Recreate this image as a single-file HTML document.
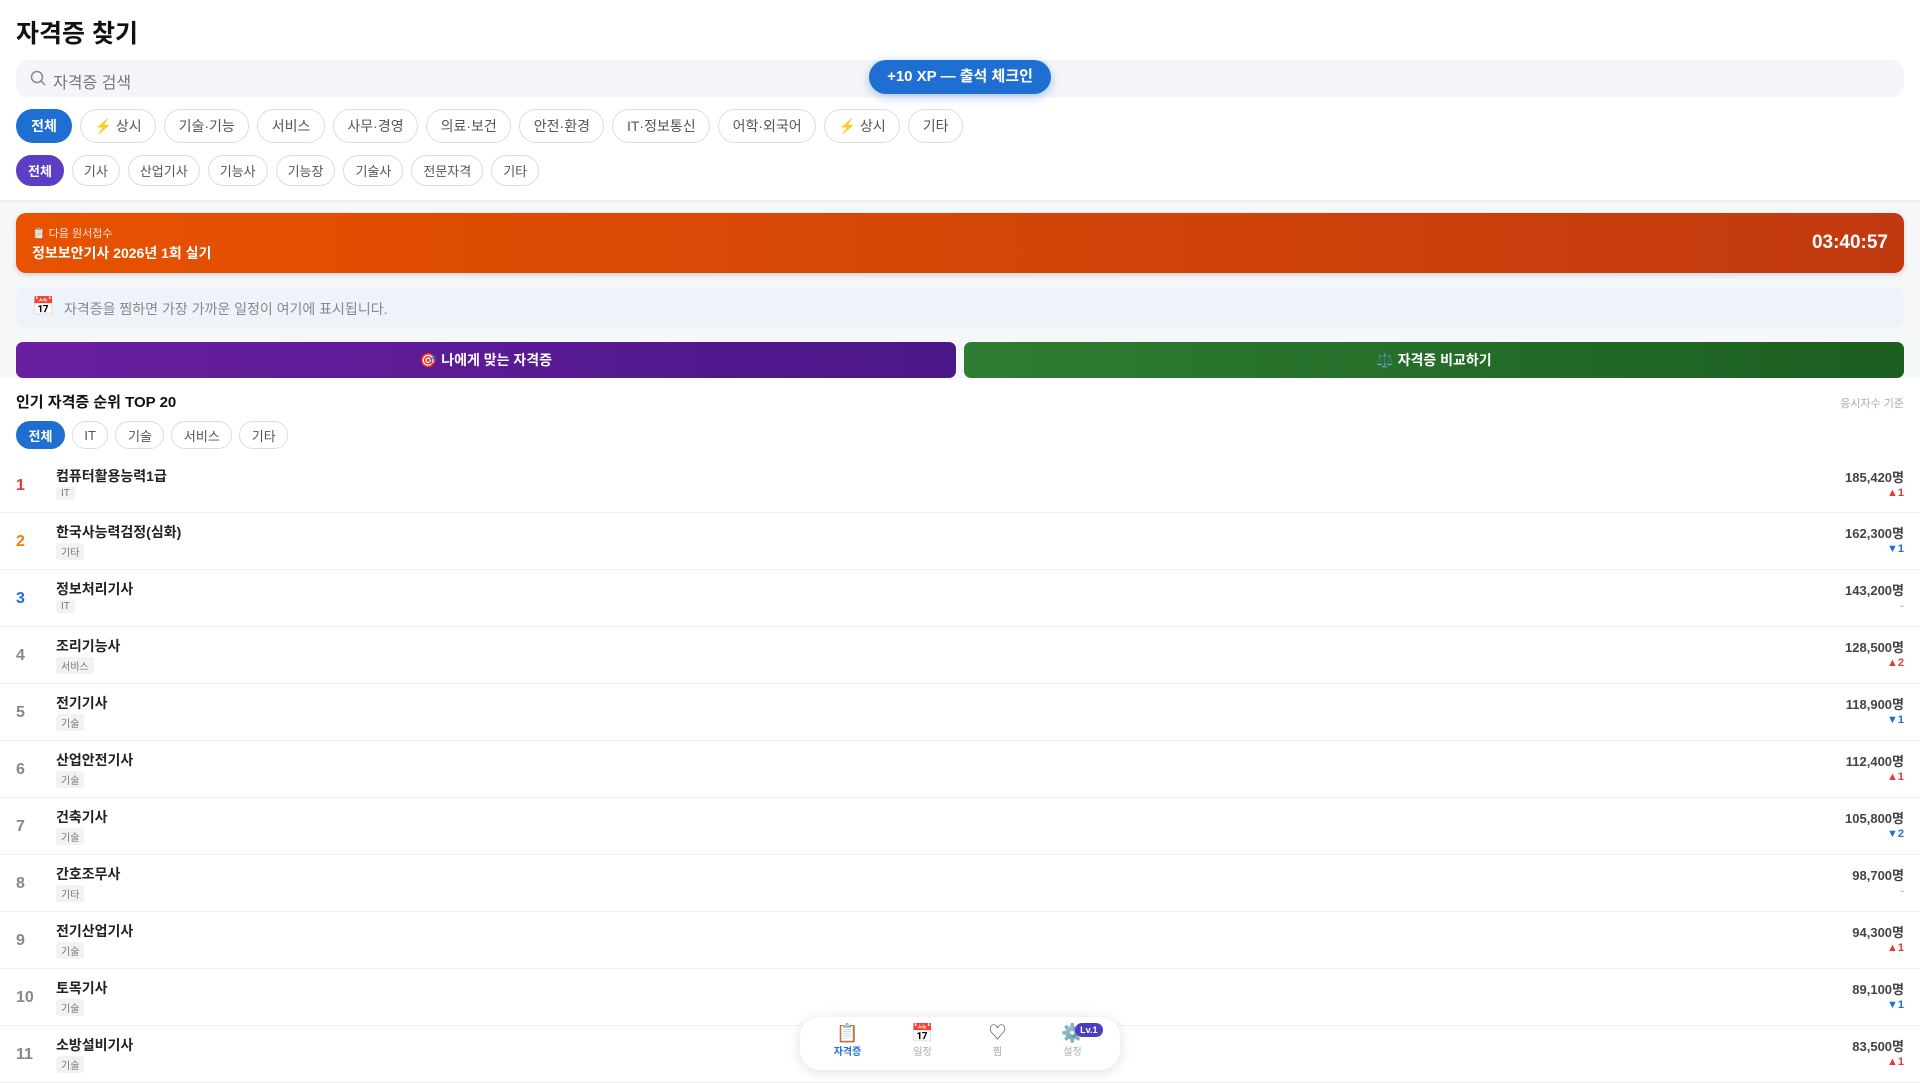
<!DOCTYPE html>
<html><head><meta charset="utf-8"><style>
*{box-sizing:border-box;margin:0;padding:0}
body{width:1920px;height:1080px;overflow:hidden;background:#fff;font-family:"Liberation Sans","Noto Sans CJK KR",sans-serif;color:#222;position:relative}
.top{position:absolute;left:0;top:0;width:1920px;height:202px;background:#fff;border-bottom:2px solid #eef0f3}
h1{position:absolute;left:16px;top:14px;font-size:25px;font-weight:700;color:#111}
.search{position:absolute;left:16px;top:60px;width:1888px;height:37px;background:#f4f5f8;border-radius:12px;font-size:16px;color:#777;padding:9px 0 0 37px}
.search svg{position:absolute;left:14px;top:10px}
.xp{position:absolute;left:869px;top:60px;width:182px;height:34px;background:#1f6fd3;border-radius:17px;color:#fff;font-weight:700;font-size:15px;text-align:center;line-height:34px;box-shadow:0 3px 10px rgba(31,111,211,.35)}
.row{position:absolute;left:16px;display:flex;gap:8px}
.chip{border:1px solid #ddd;border-radius:20px;background:#fff;color:#555;font-size:14px;display:flex;align-items:center;justify-content:center;white-space:nowrap}
.r1 .chip{height:34px;padding:0 13.5px}
.r2 .chip{height:31px;padding:0 11px;font-size:13px}
.on{background:#1f6fd3!important;color:#fff!important;border-color:#1f6fd3!important;font-weight:700}
.onp{background:#5b3ec4!important;color:#fff!important;border-color:#5b3ec4!important;font-weight:700}
.gray{position:absolute;left:0;top:202px;width:1920px;height:176px;background:#f6f7f9}
.banner{position:absolute;left:16px;top:213px;width:1888px;height:60px;border-radius:10px;background:linear-gradient(90deg,#e85200,#c1390f);color:#fff;box-shadow:0 2px 6px rgba(0,0,0,.15)}
.banner .s{position:absolute;left:16px;top:12px;font-size:11px;opacity:.85}
.banner .t{position:absolute;left:16px;top:30px;font-size:14px;font-weight:700}
.banner .c{position:absolute;right:16px;top:19px;font-size:19px;font-weight:700}
.note{position:absolute;left:16px;top:287px;width:1888px;height:41px;background:#eef2f9;border-radius:10px;font-size:14px;color:#888;padding:12px 0 0 48px}
.note .i{position:absolute;left:16px;top:9px;font-size:18px}
.btn{position:absolute;top:342px;height:36px;border-radius:7px;color:#fff;font-weight:700;font-size:14px;text-align:center;line-height:36px}
.sec{position:absolute;left:16px;top:391px;font-size:15px;font-weight:700;color:#111}
.crit{position:absolute;right:16px;top:395px;font-size:11px;color:#aaa}
.tabs{position:absolute;left:16px;top:421px;display:flex;gap:7px}
.tabs .chip{height:28px;padding:0 11.5px;font-size:13px}
.item{position:absolute;left:0;width:1920px;border-bottom:1px solid #f0f1f3}
.rk{position:absolute;left:16px;font-size:16px;font-weight:700}
.nm{position:absolute;left:56px;font-size:14px;font-weight:700;color:#222}
.tg{position:absolute;left:56px;font-size:10px;color:#777;background:#f1f2f4;border-radius:3px;padding:1px 5px}
.cnt{position:absolute;right:16px;font-size:13px;font-weight:700;color:#444}
.ch{position:absolute;right:16px;font-size:11px;font-weight:700}
.nav{position:absolute;left:800px;top:1017px;width:320px;height:53px;background:#fff;border-radius:20px;box-shadow:0 2px 14px rgba(0,0,0,.13);display:flex;justify-content:space-around;padding:6px 10px 0}
.nav div{width:60px;text-align:center;font-size:10px;color:#aaa;position:relative}
.nav .ic{font-size:18px;line-height:20px;display:block;color:#555}
.lv{position:absolute;right:0;top:0;background:#4b3fc0;color:#fff;font-size:9px;font-weight:700;border-radius:9px;padding:2px 5px}
</style></head><body>
<div class="top">
<h1>자격증 찾기</h1>
<div class="search"><svg width="16" height="16" viewBox="0 0 16 16"><circle cx="7" cy="7" r="5.5" fill="none" stroke="#888" stroke-width="1.5"/><path d="M11 11l4 4" stroke="#888" stroke-width="1.5"/></svg>자격증 검색</div>
<div class="row r1" style="top:109px"><div class="chip on" style="width:56px">전체</div><div class="chip">⚡ 상시</div><div class="chip">기술·기능</div><div class="chip">서비스</div><div class="chip">사무·경영</div><div class="chip">의료·보건</div><div class="chip">안전·환경</div><div class="chip">IT·정보통신</div><div class="chip">어학·외국어</div><div class="chip">⚡ 상시</div><div class="chip">기타</div></div>
<div class="row r2" style="top:155px"><div class="chip onp">전체</div><div class="chip">기사</div><div class="chip">산업기사</div><div class="chip">기능사</div><div class="chip">기능장</div><div class="chip">기술사</div><div class="chip">전문자격</div><div class="chip">기타</div></div>
</div>
<div class="xp">+10 XP — 출석 체크인</div>
<div class="gray"></div>
<div class="banner"><div class="s">📋 다음 원서접수</div><div class="t">정보보안기사 2026년 1회 실기</div><div class="c">03:40:57</div></div>
<div class="note"><span class="i">📅</span>자격증을 찜하면 가장 가까운 일정이 여기에 표시됩니다.</div>
<div class="btn" style="left:16px;width:940px;background:linear-gradient(90deg,#6a1fa0,#4a1788)">🎯 나에게 맞는 자격증</div>
<div class="btn" style="left:964px;width:940px;background:linear-gradient(90deg,#2e7d32,#1b5e20)">⚖️ 자격증 비교하기</div>
<div class="sec">인기 자격증 순위 TOP 20</div><div class="crit">응시자수 기준</div>
<div class="tabs"><div class="chip on">전체</div><div class="chip">IT</div><div class="chip">기술</div><div class="chip">서비스</div><div class="chip">기타</div></div>
<div id="list"></div>
<script>
var d=[["컴퓨터활용능력1급","IT","185,420명","▲1"],["한국사능력검정(심화)","기타","162,300명","▼1"],["정보처리기사","IT","143,200명","-"],["조리기능사","서비스","128,500명","▲2"],["전기기사","기술","118,900명","▼1"],["산업안전기사","기술","112,400명","▲1"],["건축기사","기술","105,800명","▼2"],["간호조무사","기타","98,700명","-"],["전기산업기사","기술","94,300명","▲1"],["토목기사","기술","89,100명","▼1"],["소방설비기사","기술","83,500명","▲1"]];
var h="",y0=459;
d.forEach(function(r,i){var ht=i==0?54:57;var rc=i==0?"#e53935":i==1?"#f57c00":i==2?"#1f6fd3":"#888";var cc=r[3][0]=="▲"?"#e53935":r[3][0]=="▼"?"#1f6fd3":"#bbb";
h+='<div class="item" style="top:'+y0+'px;height:'+ht+'px"><div class="rk" style="top:'+(ht/2-9)+'px;color:'+rc+'">'+(i+1)+'</div><div class="nm" style="top:'+(ht/2-20)+'px">'+r[0]+'</div><div class="tg" style="top:'+(ht/2+1)+'px">'+r[1]+'</div><div class="cnt" style="top:'+(ht/2-19)+'px">'+r[2]+'</div><div class="ch" style="top:'+(ht/2+1)+'px;color:'+cc+'">'+r[3]+'</div></div>';y0+=ht;});
document.getElementById("list").innerHTML=h;
</script>
<div class="nav"><div style="color:#1f6fd3;font-weight:700"><span class="ic">📋</span>자격증</div><div><span class="ic">📅</span>일정</div><div><span class="ic">♡</span>찜</div><div><span class="ic">⚙️</span>설정<span class="lv">Lv.1</span></div></div>
</body></html>
